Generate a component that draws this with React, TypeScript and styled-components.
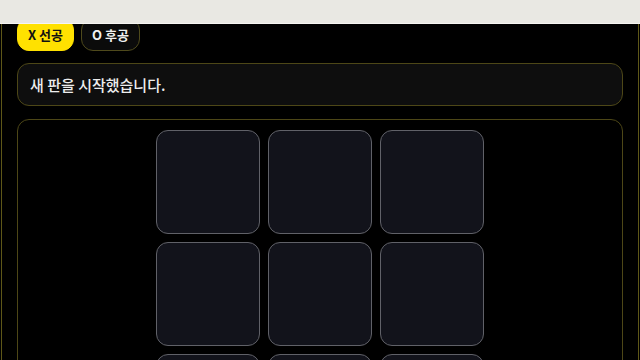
import React from "react";
import styled, { createGlobalStyle } from "styled-components";

const Global = createGlobalStyle`
  html, body { margin: 0; padding: 0; background: #000; }
  body { font-family: "Noto Sans", "Noto Sans CJK KR", sans-serif; color: #e8e8e8; overflow: hidden; }
  * { box-sizing: border-box; }
`;

const TopBar = styled.div`
  position: fixed;
  top: 0;
  left: 0;
  right: 0;
  height: 24px;
  background: #e9e8e3;
  border-bottom: 1px solid #f6f5f2;
  z-index: 10;
`;

const Shell = styled.div`
  margin: 0 1px;
  margin-top: 4px;
  padding: 13px 15px 20px;
  border: 1px solid #5e5718;
  border-radius: 14px;
  min-height: 400px;
  background: #000;
`;

const ButtonRow = styled.div`
  display: flex;
  gap: 7px;
`;

const TurnButton = styled.button<{ $active?: boolean }>`
  height: 33px;
  padding: 0 10px;
  border-radius: 12px;
  border: 1px solid ${(p) => (p.$active ? "#ffe100" : "#4f4a1c")};
  background: ${(p) => (p.$active ? "#ffe100" : "#0b0b0b")};
  color: ${(p) => (p.$active ? "#111" : "#f0f0f0")};
  font-family: "Noto Sans CJK KR", sans-serif;
  font-weight: 700;
  font-size: 13px;
  line-height: 1;
  display: flex;
  align-items: center;
`;

const Status = styled.div`
  margin-top: 12px;
  height: 43px;
  padding: 0 12px;
  border: 1px solid #4d4717;
  border-radius: 12px;
  background: #0e0e0e;
  display: flex;
  align-items: center;
  font-family: "Noto Sans CJK KR", sans-serif;
  font-size: 15px;
  font-weight: 500;
  color: #ededed;
`;

const BoardPanel = styled.div`
  margin-top: 13px;
  padding: 10px;
  border: 1px solid #4d4717;
  border-radius: 12px;
  background: #000;
  display: flex;
  justify-content: center;
`;

const Grid = styled.div`
  display: grid;
  grid-template-columns: repeat(3, 104px);
  grid-auto-rows: 104px;
  gap: 8px;
`;

const Cell = styled.button`
  border: 1.5px solid #606168;
  border-radius: 12px;
  background: #12131b;
  padding: 0;
`;

export default function App() {
  return (
    <>
      <Global />
      <TopBar />
      <Shell>
        <ButtonRow>
          <TurnButton $active>X 선공</TurnButton>
          <TurnButton>O 후공</TurnButton>
        </ButtonRow>
        <Status>새 판을 시작했습니다.</Status>
        <BoardPanel>
          <Grid>
            {Array.from({ length: 9 }).map((_, i) => (
              <Cell key={i} />
            ))}
          </Grid>
        </BoardPanel>
      </Shell>
    </>
  );
}
